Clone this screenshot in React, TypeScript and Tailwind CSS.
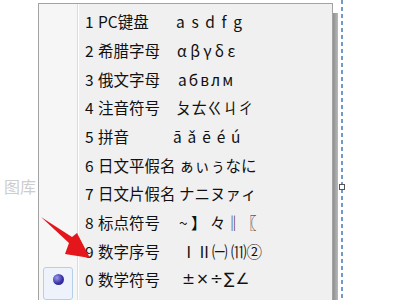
const rows: { n: string; label: string; sym: string; cls: string }[] = [
  { n: "1", label: "PC键盘", sym: "a s d f g", cls: "ml-[0px] tracking-[1.6px]" },
  { n: "2", label: "希腊字母", sym: "αβγδε", cls: "ml-[1px] tracking-[3.5px]" },
  { n: "3", label: "俄文字母", sym: "абвлм", cls: "ml-[2px] tracking-[2px]" },
  { n: "4", label: "注音符号", sym: "ㄆㄊㄍㄐㄔ", cls: "ml-[0px]" },
  { n: "5", label: "拼音", sym: "ā ǎ ē é ú", cls: "ml-[-3px] tracking-[1.2px]" },
  { n: "6", label: "日文平假名", sym: "ぁぃぅなに", cls: "ml-[3px]" },
  { n: "7", label: "日文片假名", sym: "ナニヌァィ", cls: "ml-[3px]" },
  { n: "8", label: "标点符号", sym: "~ 】 々‖〖", cls: "ml-[3px]" },
  { n: "9", label: "数字序号", sym: "ⅠⅡ㈠ ⑾②", cls: "ml-[5px]" },
  { n: "0", label: "数学符号", sym: "±×÷∑∠", cls: "ml-[6px] tracking-[1px] font-['DejaVu_Sans',sans-serif]" },
];

function Arrow() {
  return (
    <svg className="absolute left-0 top-0" width="400" height="300">
      <polygon
        points="41,217 72,237 77,233 90,258 65,254 69,243"
        fill="#e5161b"
      />
    </svg>
  );
}

export default function App() {
  return (
    <div className="relative w-[400px] h-[300px] overflow-hidden bg-white flex font-['Noto_Sans_CJK_SC','Noto_Sans',sans-serif]">
      <div className="w-[38px] shrink-0 pt-[174px] pl-[4px] text-[16px] text-[#cdcdcd]">
        图库
      </div>

      <div className="mt-[3px] w-[295px] h-[320px] shrink-0 border border-[#a3a3a3] bg-[#f0f0f0] flex">
        <div className="w-[39px] shrink-0 border-r border-[#dcdcdc] bg-[#f6f6f6] flex flex-col pt-[3.7px]">
          {rows.map((r, i) => (
            <div key={r.n} className="h-[28.67px] flex items-center justify-center">
              {i === 9 && (
                <div className="w-[30px] h-[33px] mt-[8px] rounded-[3px] border border-[#b6cfe8] bg-[#eef3fb] flex items-center justify-center">
                  <div className="w-[11px] h-[11px] rounded-full bg-[radial-gradient(circle_at_35%_35%,#9b9be8,#3a32a8_55%,#1d1870)] -mt-[8px]" />
                </div>
              )}
            </div>
          ))}
        </div>
        <div className="flex flex-col pt-[3.7px] pl-[6px] border-l border-white">
          {rows.map((r) => (
            <div
              key={r.n}
              className="h-[28.67px] flex items-center text-[15.5px] text-[#111] leading-none"
            >
              <span className="w-[13px]">{r.n}</span>
              <span className="w-[78px]">{r.label}</span>
              <span className={r.cls}>{r.sym}</span>
            </div>
          ))}
        </div>
      </div>

      <div className="w-[5px] shrink-0 mt-[13px] bg-gradient-to-r from-[#8f8f8f] to-[#b9b9b9]" />
      <div className="w-[3px] shrink-0" />
      <div className="relative w-[2px] shrink-0 bg-[repeating-linear-gradient(to_bottom,#6f9acb_0_4px,transparent_4px_7px)]">
        <div className="absolute left-[-2px] top-[184px] w-[6px] h-[6px] border border-[#555] bg-white" />
      </div>

      <Arrow />
    </div>
  );
}
